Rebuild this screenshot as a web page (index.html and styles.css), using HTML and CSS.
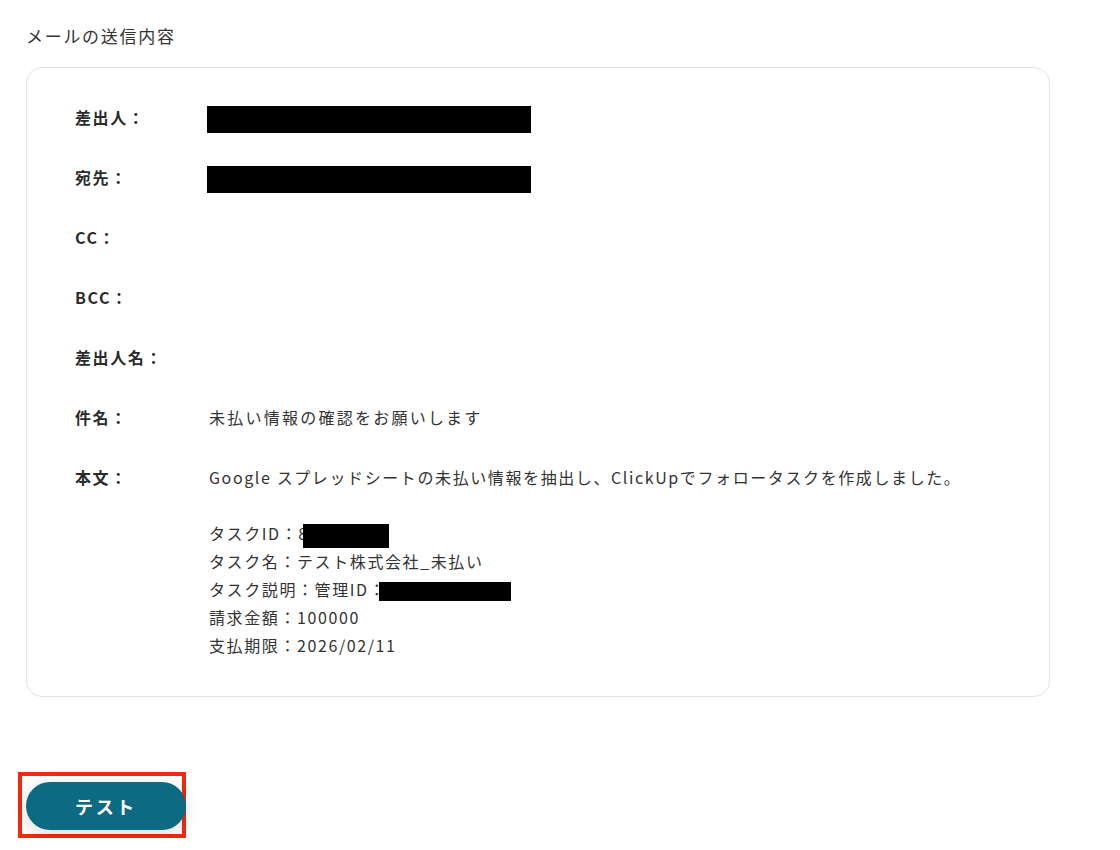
FILE: index.html
```html
<!DOCTYPE html>
<html lang="ja">
<head>
    <meta charset="UTF-8">
    <title>メールの送信内容</title>
    <link rel="stylesheet" href="styles.css">
</head>
<body>
    <div class="page">
        <h2 class="section-title">メールの送信内容</h2>

        <div class="mail-card">
            <div class="mail-row">
                <div class="mail-label">差出人：</div>
                <div class="mail-value"><span class="redact redact-wide"></span></div>
            </div>
            <div class="mail-row">
                <div class="mail-label">宛先：</div>
                <div class="mail-value"><span class="redact redact-wide"></span></div>
            </div>
            <div class="mail-row">
                <div class="mail-label">CC：</div>
                <div class="mail-value"></div>
            </div>
            <div class="mail-row">
                <div class="mail-label">BCC：</div>
                <div class="mail-value"></div>
            </div>
            <div class="mail-row">
                <div class="mail-label">差出人名：</div>
                <div class="mail-value"></div>
            </div>
            <div class="mail-row">
                <div class="mail-label">件名：</div>
                <div class="mail-value subject">未払い情報の確認をお願いします</div>
            </div>
            <div class="mail-row">
                <div class="mail-label">本文：</div>
                <div class="mail-value body-text">
                    <p>Google スプレッドシートの未払い情報を抽出し、ClickUpでフォロータスクを作成しました。</p>
                    <p class="blank"></p>
                    <p>タスクID：8<span class="redact redact-id"></span></p>
                    <p>タスク名：テスト株式会社_未払い</p>
                    <p>タスク説明：管理ID：<span class="redact redact-kanri"></span></p>
                    <p>請求金額：100000</p>
                    <p>支払期限：2026/02/11</p>
                </div>
            </div>
        </div>

        <div class="actions">
            <div class="highlight-box">
                <button type="button" class="test-btn">テスト</button>
            </div>
        </div>
    </div>
</body>
</html>
```

FILE: styles.css
```css
body {
    margin: 0;
    background: #ffffff;
    color: #333333;
    font-family: "Noto Sans CJK JP", "Inter", sans-serif;
}

.page {
    padding: 24px 70px 0 26px;
}

.section-title {
    margin: 0 0 19px;
    font-size: 17px;
    font-weight: normal;
    line-height: 24px;
    letter-spacing: 0.1em;
    color: #333;
}

.mail-card {
    width: 1024px;
    box-sizing: border-box;
    border: 1px solid #e3e3e3;
    border-radius: 16px;
    padding: 35px 48px 37px;
    display: flex;
    flex-direction: column;
    gap: 32px;
}

.mail-row {
    display: flex;
    font-size: 16px;
    line-height: 28px;
    letter-spacing: 0.1em;
}

.mail-label {
    width: 132px;
    flex-shrink: 0;
    font-weight: bold;
    color: #2b2b2b;
}

.mail-value {
    flex: 1;
    height: 28px;
    padding-left: 2px;
}

.mail-value.subject {
    letter-spacing: 0.14em;
}

.mail-value.body-text {
    height: auto;
}

.body-text p {
    margin: 0;
    height: 28px;
}

.redact {
    display: inline-block;
    background: #000;
    vertical-align: middle;
}

.redact-wide {
    display: block;
    width: 324px;
    height: 27px;
    margin: 3px 0 0 -2px;
}

.redact-id {
    width: 86px;
    height: 24px;
    margin-left: -6px;
}

.redact-kanri {
    width: 132px;
    height: 19px;
    margin-left: -7px;
}

.actions {
    margin-top: 75px;
    margin-left: -8px;
}

.highlight-box {
    display: inline-block;
    border: 4px solid #f12a0c;
    padding: 6px 0 4px 4px;
}

.test-btn {
    display: block;
    width: 160px;
    height: 48px;
    margin-right: -4px;
    padding-top: 0;
    border: none;
    border-radius: 24px;
    background: #0d6a83;
    color: #ffffff;
    font-family: "Noto Sans CJK JP", sans-serif;
    font-size: 18px;
    font-weight: bold;
    letter-spacing: 0.15em;
    line-height: 44px;
    box-shadow: 0 4px 16px rgba(0, 0, 0, 0.14);
    cursor: pointer;
}
```
